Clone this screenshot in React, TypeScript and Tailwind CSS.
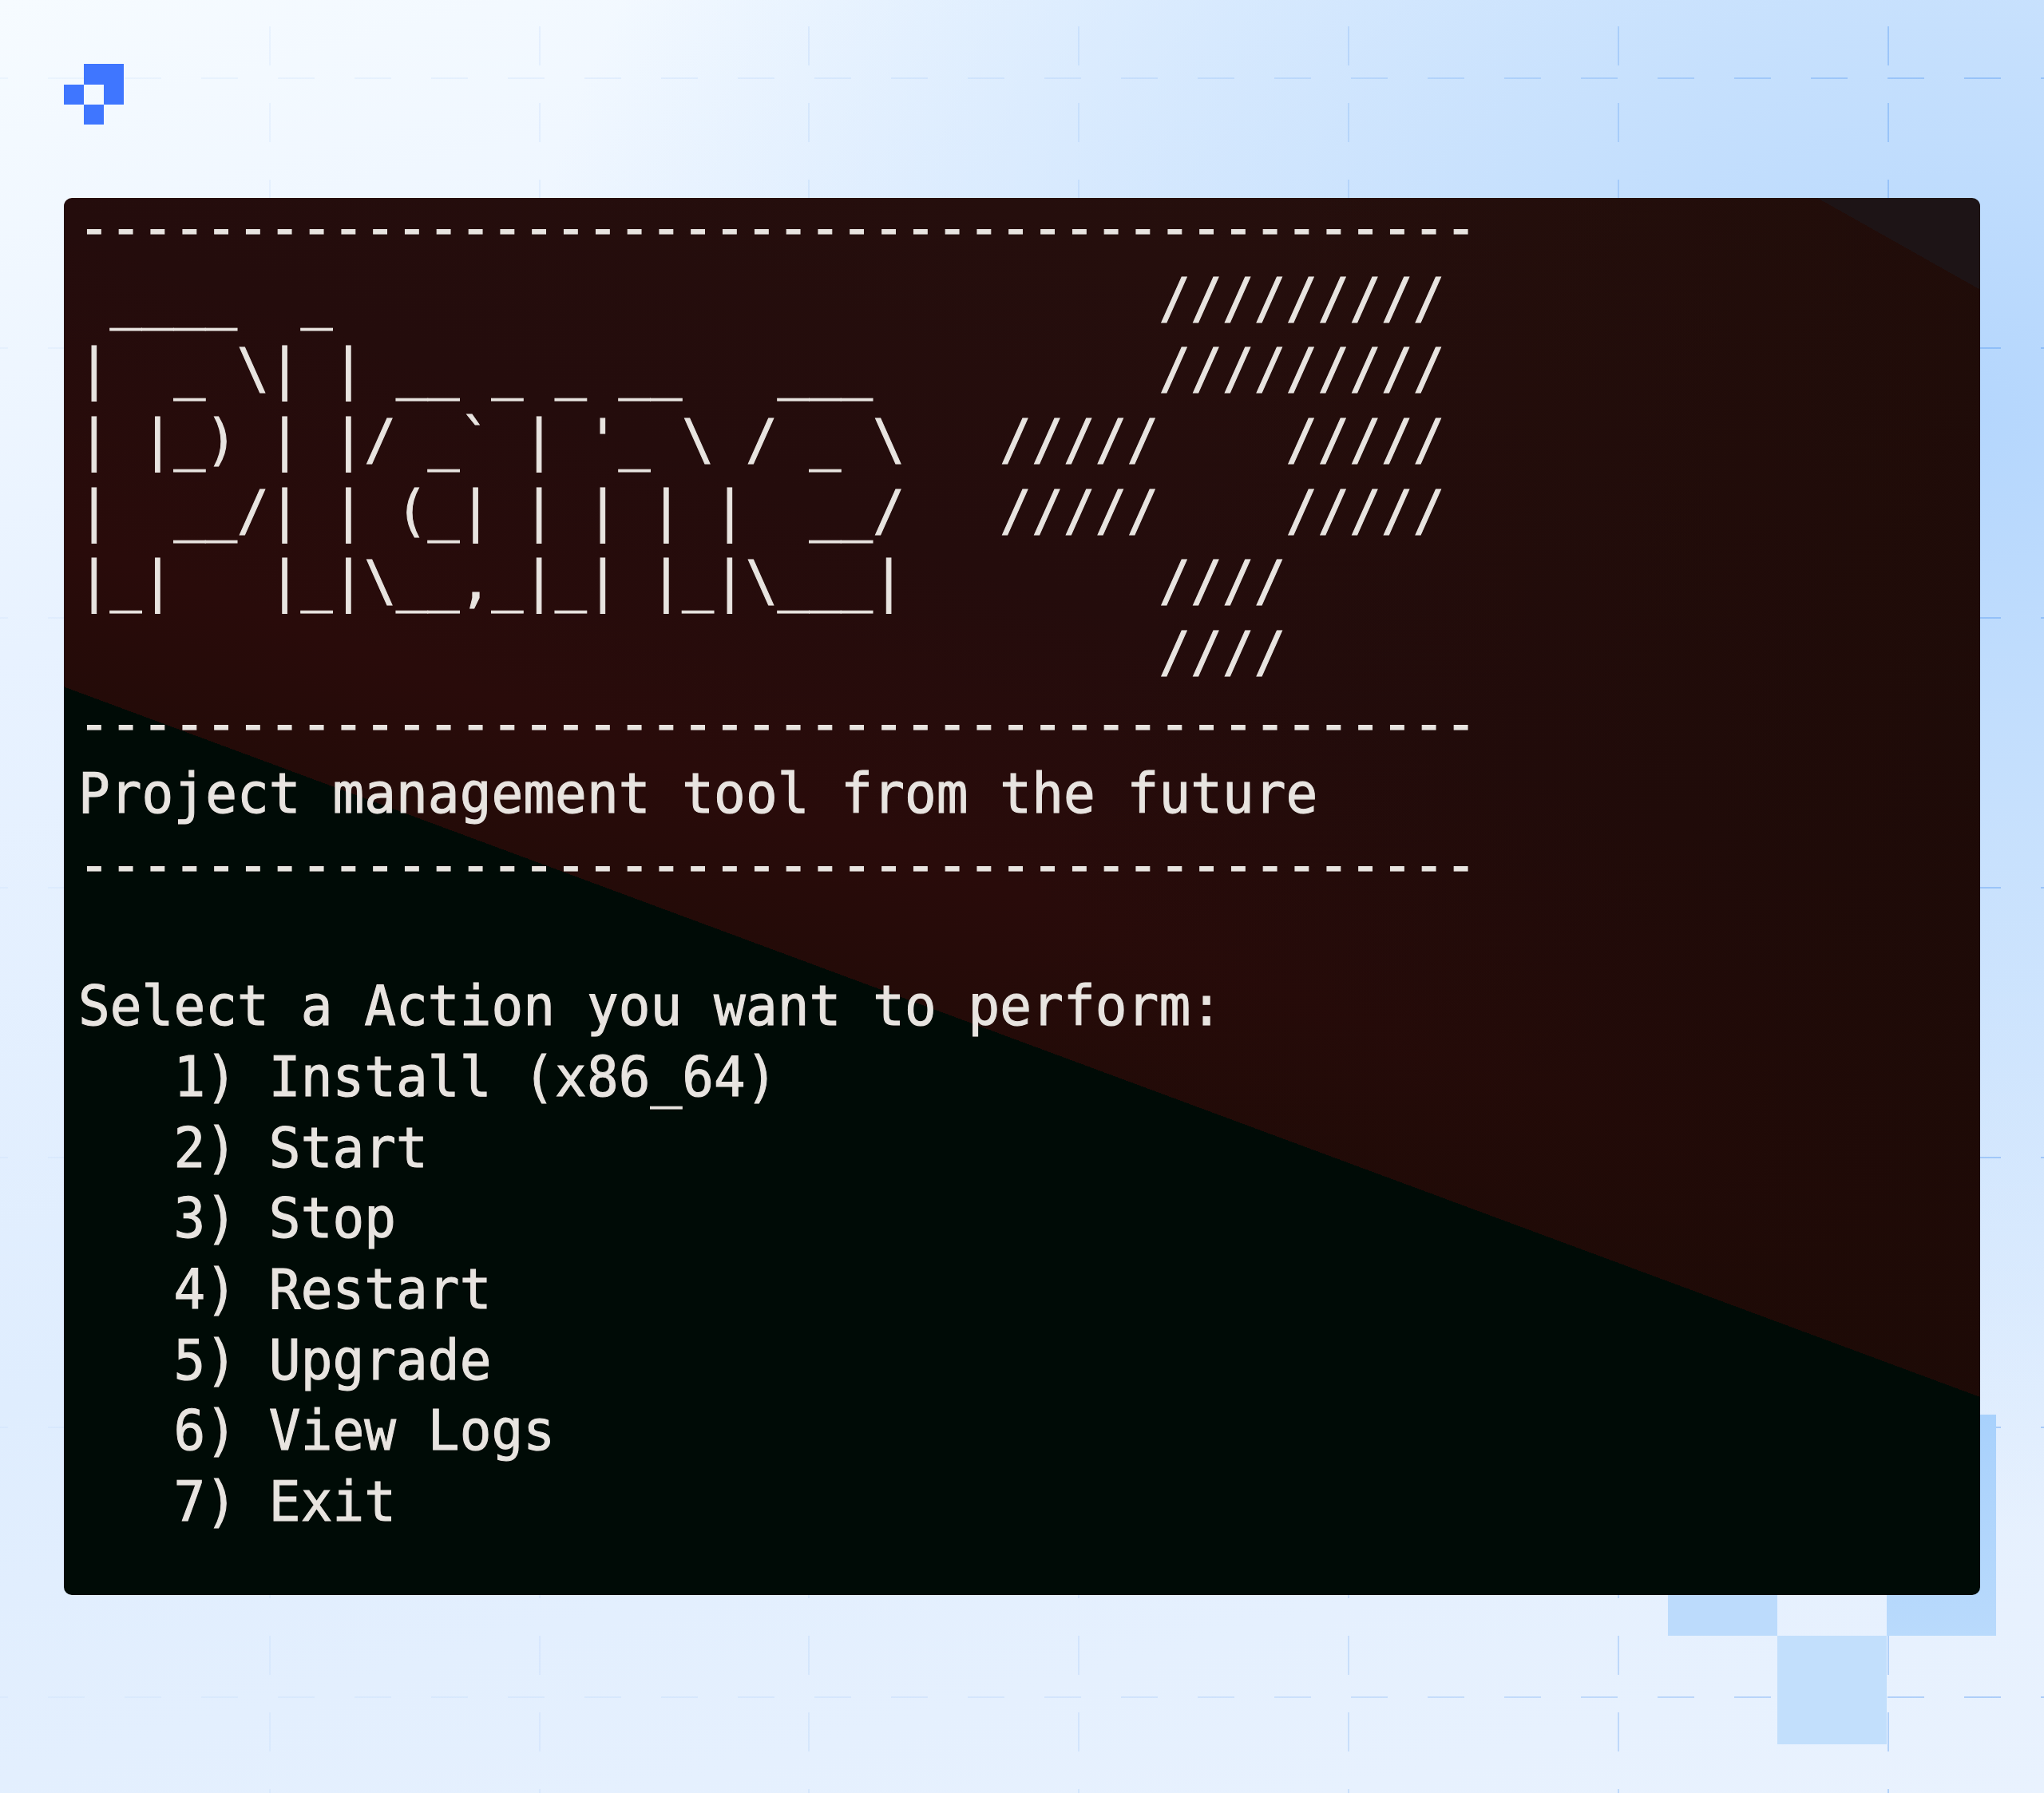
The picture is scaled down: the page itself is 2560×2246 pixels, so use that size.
const dashes = '-'.repeat(44);

const terminalLines = [
  dashes,
  ' ____  _                          /////////',
  '|  _ \\| | __ _ _ __   ___         /////////',
  "| |_) | |/ _` | '_ \\ / _ \\   /////    /////",
  '|  __/| | (_| | | | |  __/   /////    /////',
  '|_|   |_|\\__,_|_| |_|\\___|        ////',
  '                                  ////',
  dashes,
  'Project management tool from the future',
  dashes,
  '',
  'Select a Action you want to perform:',
  '   1) Install (x86_64)',
  '   2) Start',
  '   3) Stop',
  '   4) Restart',
  '   5) Upgrade',
  '   6) View Logs',
  '   7) Exit',
];

function GridLines() {
  const columns = [338, 676, 1013, 1351, 1689, 2027, 2365];
  const rows = [98, 436, 774, 1112, 1450, 1788, 2126];
  return (
    <svg className="absolute inset-0" width="2560" height="2246" aria-hidden="true">
      <defs>
        <linearGradient id="gridFade" gradientUnits="userSpaceOnUse" x1="0" y1="0" x2="2560" y2="0">
          <stop offset="0" stopColor="#7fb0f0" stopOpacity={0.08} />
          <stop offset="0.5" stopColor="#6ea6f0" stopOpacity={0.14} />
          <stop offset="1" stopColor="#4f95f0" stopOpacity={0.4} />
        </linearGradient>
      </defs>
      {columns.map((x) => (
        <rect key={x} x={x - 1} y={0} width={2} height={2246} fill="url(#gridFade)" mask="url(#vDash)" />
      ))}
      <mask id="vDash" maskUnits="userSpaceOnUse" x="0" y="0" width="2560" height="2246">
        <line x1={1280} y1={0} x2={1280} y2={2246} stroke="white" strokeWidth={2560} strokeDasharray="49 47" strokeDashoffset={63} />
      </mask>
      {rows.map((y) => (
        <line key={y} x1={0} y1={y} x2={2560} y2={y} stroke="url(#gridFade)" strokeWidth={2} strokeDasharray="46 50" strokeDashoffset={36} />
      ))}
    </svg>
  );
}

function PlaneLogo() {
  return (
    <svg width="75" height="76" viewBox="0 0 75 76" fill="#3f76ff" aria-label="Plane">
      <path d="M25 0H75V51H50V26H25Z" />
      <rect x="0" y="26" width="25" height="25" />
      <rect x="25" y="51" width="25" height="25" />
    </svg>
  );
}

export default function App() {
  return (
    <div className="relative w-[2560px] h-[2246px] overflow-hidden bg-[radial-gradient(1800px_1400px_at_2450px_520px,#b4d6fd_0%,#c6e0fd_35%,rgba(214,232,254,0)_100%),linear-gradient(165deg,#f6fbff_0%,#e8f2ff_28%,#dfedfe_60%,#e9f2fe_100%)]">
      <GridLines />
      {/* pale squares peeking out from behind the terminal */}
      <div className="absolute left-[2363px] top-[1772px] w-[137px] h-[277px] bg-[linear-gradient(180deg,#a8d1fc_0%,#b9dafc_100%)]" />
      <div className="absolute left-[2089px] top-[1912px] w-[137px] h-[137px] bg-[#bcdbfc]" />
      <div className="absolute left-[2226px] top-[2049px] w-[137px] h-[136px] bg-[#c2dffc]" />

      <div className="relative flex flex-col px-[80px] pt-[80px]">
        <PlaneLogo />
        <div className="mt-[92px] h-[1750px] rounded-[10px] pl-[18px] bg-[linear-gradient(200.34deg,rgba(0,0,0,0)_56.9%,#000b06_56.9%),linear-gradient(29.4deg,rgba(0,0,0,0)_96.3%,#1d1416_96.3%),linear-gradient(110deg,rgba(28,10,6,0)_50%,rgba(28,10,6,0.8)_92%),linear-gradient(200.34deg,#26100d_0%,#240c0c_35%,#290b0a_50%,#240b08_56.9%)]">
          <pre className="-mt-[7px] origin-top scale-y-[1.06] font-['DejaVu_Sans_Mono',monospace] text-[66px] leading-[83.65px] tracking-[0.07px] text-[#e8e4e0] [-webkit-text-stroke:1px_#e8e4e0]">
            {terminalLines.join('\n')}
          </pre>
        </div>
      </div>
    </div>
  );
}
